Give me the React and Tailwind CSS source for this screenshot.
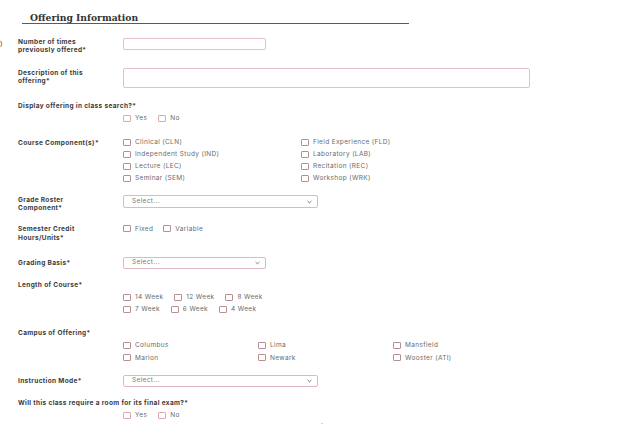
import React from "react";

const Box = ({ pink }) => (
  <span
    className={`inline-block w-[8px] h-[7px] -mt-[2px] rounded-[1px] border shrink-0 ${
      pink ? "border-[#dba9b0]" : "border-[#b58f94]"
    }`}
  />
);

const Check = ({ label, pink, className = "" }) => (
  <span className={`flex items-center gap-[4px] ${className}`}>
    <Box pink={pink} />
    <span className="text-[#6a6a6a]">{label}</span>
  </span>
);

const Label = ({ children, className = "" }) => (
  <div className={`w-[105px] shrink-0 font-bold text-[#3a3a3a] leading-[8px] ${className}`}>
    {children}
  </div>
);

const Select = ({ width }) => (
  <div
    className={`${width} flex items-center justify-between border border-[#e0b8bd] rounded-[2px] pl-[8px] pr-[5px] text-[#7a7a7a]`}
  >
    <span>Select...</span>
    <svg width="5" height="4" viewBox="0 0 5 4" fill="none">
      <path d="M0.6 1 L2.5 2.8 L4.4 1" stroke="#555" strokeWidth="0.8" />
    </svg>
  </div>
);

export default function App() {
  const courseLeft = ["Clinical (CLN)", "Independent Study (IND)", "Lecture (LEC)", "Seminar (SEM)"];
  const courseRight = ["Field Experience (FLD)", "Laboratory (LAB)", "Recitation (REC)", "Workshop (WRK)"];

  return (
    <div className="w-[640px] h-[424px] overflow-hidden bg-white font-['Inter','Liberation_Sans',sans-serif] text-[6.5px] tracking-[0.35px]">
      {/* heading */}
      <div className="mt-[12px] ml-[22px] w-[387px] h-[12px] border-b border-[#5a5a5a] pl-[8px] font-['DejaVu_Serif',serif] font-bold text-[9.2px] leading-[11px] text-[#333] tracking-normal">
        Offering Information
      </div>

      {/* number of times */}
      <div className="mt-[14px] flex">
        <div className="w-[18px] shrink-0 text-[#333] text-[7px] leading-[9px] pt-[1px]">)</div>
        <Label>
          Number of times
          <br />
          previously offered*
        </Label>
        <div className="w-[143px] h-[12px] border border-[#e3c1c5] rounded-[2px]" />
      </div>

      {/* description */}
      <div className="mt-[14px] flex pl-[18px]">
        <Label className="pt-[1px]">
          Description of this
          <br />
          offering*
        </Label>
        <div className="w-[407px] h-[20px] border border-[#e3c1c5] rounded-[2px]" />
      </div>

      {/* display in class search */}
      <div className="mt-[14px] pl-[18px]">
        <Label className="w-auto">Display offering in class search?*</Label>
        <div className="mt-[3px] ml-[105px] flex gap-[11px] h-[12px] items-center">
          <Check label="Yes" pink />
          <Check label="No" pink />
        </div>
      </div>

      {/* course components */}
      <div className="mt-[12px] flex pl-[18px]">
        <Label className="leading-[12px]">Course Component(s)*</Label>
        <div className="flex">
          <div className="w-[178px]">
            {courseLeft.map((c) => (
              <div key={c} className="h-[12px] flex items-center">
                <Check label={c} />
              </div>
            ))}
          </div>
          <div>
            {courseRight.map((c) => (
              <div key={c} className="h-[12px] flex items-center">
                <Check label={c} />
              </div>
            ))}
          </div>
        </div>
      </div>

      {/* grade roster */}
      <div className="mt-[10px] flex pl-[18px]">
        <Label className="pt-[1px]">
          Grade Roster
          <br />
          Component*
        </Label>
        <div className="h-[13px] flex">
          <Select width="w-[195px]" />
        </div>
      </div>

      {/* semester credit */}
      <div className="mt-[13px] flex pl-[18px]">
        <Label className="leading-[9px]">
          Semester Credit
          <br />
          Hours/Units*
        </Label>
        <div className="flex gap-[10px] h-[9px] items-center">
          <Check label="Fixed" />
          <Check label="Variable" />
        </div>
      </div>

      {/* grading basis */}
      <div className="mt-[14px] flex pl-[18px]">
        <Label className="leading-[12px]">Grading Basis*</Label>
        <div className="h-[12px] flex">
          <Select width="w-[143px]" />
        </div>
      </div>

      {/* length of course */}
      <div className="mt-[12px] pl-[18px]">
        <Label className="w-auto">Length of Course*</Label>
        <div className="mt-[3px] ml-[105px]">
          <div className="h-[12px] flex items-center gap-[11px]">
            <Check label="14 Week" />
            <Check label="12 Week" />
            <Check label="8 Week" />
          </div>
          <div className="h-[12px] flex items-center gap-[11px]">
            <Check label="7 Week" />
            <Check label="6 Week" />
            <Check label="4 Week" />
          </div>
        </div>
      </div>

      {/* campus */}
      <div className="mt-[13px] pl-[18px]">
        <Label className="w-auto">Campus of Offering*</Label>
        <div className="mt-[3px] ml-[105px] grid grid-cols-[135px_135px_135px]">
          {["Columbus", "Lima", "Mansfield", "Marion", "Newark", "Wooster (ATI)"].map((c) => (
            <div key={c} className="h-[12.5px] flex items-center">
              <Check label={c} />
            </div>
          ))}
        </div>
      </div>

      {/* instruction mode */}
      <div className="mt-[10px] flex pl-[18px]">
        <Label className="leading-[12px]">Instruction Mode*</Label>
        <div className="h-[12px] flex">
          <Select width="w-[195px]" />
        </div>
      </div>

      {/* final exam */}
      <div className="mt-[12px] pl-[18px]">
        <Label className="w-auto">Will this class require a room for its final exam?*</Label>
        <div className="mt-[3px] ml-[105px] flex gap-[11px] h-[12px] items-center">
          <Check label="Yes" pink />
          <Check label="No" pink />
        </div>
      </div>

      {/* top edges of the next, cut-off row */}
      <div className="flex items-start h-[6px]">
        <svg width="4" height="3" viewBox="0 0 4 3" className="mt-[2px]">
          <path d="M0 1.5 H3" stroke="#777" strokeWidth="0.8" />
        </svg>
        <svg width="8" height="5" viewBox="0 0 8 5" className="ml-[314px]">
          <path d="M1 5 A3 3 0 0 1 7 5" stroke="#777" strokeWidth="0.9" fill="none" />
        </svg>
      </div>
    </div>
  );
}
